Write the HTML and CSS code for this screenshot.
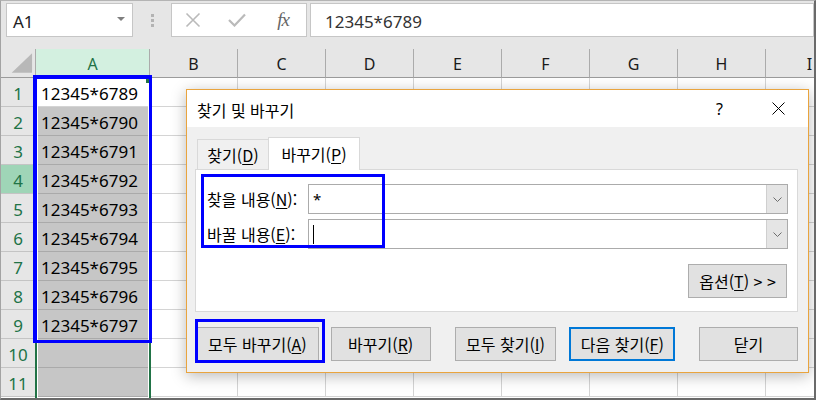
FILE: index.html
```html
<!DOCTYPE html>
<html lang="ko">
<head>
<meta charset="utf-8">
<title>찾기 및 바꾸기</title>
<link rel="stylesheet" href="styles.css">
</head>
<body>
<div class="frame">
  <div class="toolbar">
    <div class="namebox"><span class="nb-text">A1</span><span class="caret"></span></div>
    <div class="grip"><i></i><i></i><i></i></div>
    <div class="fxbox">
      <span class="slot slot-x"><svg width="16" height="16" viewBox="0 0 16 16"><path d="M1.5 1.5 L14.5 14.5 M14.5 1.5 L1.5 14.5" stroke="#bababa" stroke-width="1.6" fill="none"/></svg></span>
      <span class="slot"><svg width="18" height="14" viewBox="0 0 18 14"><path d="M1 7 L6.5 12.5 L17 1.5" stroke="#bababa" stroke-width="2.2" fill="none"/></svg></span>
      <span class="slot fx">fx</span>
    </div>
    <div class="formula">12345*6789</div>
  </div>

  <div class="sheet">
    <div class="row hdr">
      <div class="rh corner"><svg width="35" height="28" viewBox="0 0 35 28"><polygon points="32,4 32,24 11,24" fill="#b8b8b8"/></svg></div>
      <div class="ch a sel">A</div>
      <div class="ch">B</div><div class="ch">C</div><div class="ch">D</div><div class="ch">E</div>
      <div class="ch">F</div><div class="ch">G</div><div class="ch">H</div><div class="ch">I</div>
    </div>
    <div class="row"><div class="rh">1</div><div class="c a">12345*6789</div><div class="c"></div><div class="c"></div><div class="c"></div><div class="c"></div><div class="c"></div><div class="c"></div><div class="c"></div><div class="c"></div></div>
    <div class="row"><div class="rh">2</div><div class="c a on">12345*6790</div><div class="c"></div><div class="c"></div><div class="c"></div><div class="c"></div><div class="c"></div><div class="c"></div><div class="c"></div><div class="c"></div></div>
    <div class="row"><div class="rh">3</div><div class="c a on">12345*6791</div><div class="c"></div><div class="c"></div><div class="c"></div><div class="c"></div><div class="c"></div><div class="c"></div><div class="c"></div><div class="c"></div></div>
    <div class="row"><div class="rh hl">4</div><div class="c a on">12345*6792</div><div class="c"></div><div class="c"></div><div class="c"></div><div class="c"></div><div class="c"></div><div class="c"></div><div class="c"></div><div class="c"></div></div>
    <div class="row"><div class="rh">5</div><div class="c a on">12345*6793</div><div class="c"></div><div class="c"></div><div class="c"></div><div class="c"></div><div class="c"></div><div class="c"></div><div class="c"></div><div class="c"></div></div>
    <div class="row"><div class="rh">6</div><div class="c a on">12345*6794</div><div class="c"></div><div class="c"></div><div class="c"></div><div class="c"></div><div class="c"></div><div class="c"></div><div class="c"></div><div class="c"></div></div>
    <div class="row"><div class="rh">7</div><div class="c a on">12345*6795</div><div class="c"></div><div class="c"></div><div class="c"></div><div class="c"></div><div class="c"></div><div class="c"></div><div class="c"></div><div class="c"></div></div>
    <div class="row"><div class="rh">8</div><div class="c a on">12345*6796</div><div class="c"></div><div class="c"></div><div class="c"></div><div class="c"></div><div class="c"></div><div class="c"></div><div class="c"></div><div class="c"></div></div>
    <div class="row"><div class="rh">9</div><div class="c a on">12345*6797</div><div class="c"></div><div class="c"></div><div class="c"></div><div class="c"></div><div class="c"></div><div class="c"></div><div class="c"></div><div class="c"></div></div>
    <div class="row"><div class="rh">10</div><div class="c a on"></div><div class="c"></div><div class="c"></div><div class="c"></div><div class="c"></div><div class="c"></div><div class="c"></div><div class="c"></div><div class="c"></div></div>
    <div class="row"><div class="rh">11</div><div class="c a on"></div><div class="c"></div><div class="c"></div><div class="c"></div><div class="c"></div><div class="c"></div><div class="c"></div><div class="c"></div><div class="c"></div></div>
  </div>

  <div class="selbox"></div>
  <div class="fill-handle"></div>
  <div class="mark mark-col"></div>

  <div class="dialog">
    <div class="titlebar">
      <span class="title">찾기 및 바꾸기</span>
      <span class="capbtn">?</span>
      <span class="capbtn"><svg width="13" height="13" viewBox="0 0 13 13"><path d="M0.5 0.5 L12.5 12.5 M12.5 0.5 L0.5 12.5" stroke="#000" stroke-width="1" fill="none"/></svg></span>
    </div>
    <div class="body">
      <div class="tabs">
        <div class="tab">찾기(<u>D</u>)</div>
        <div class="tab active">바꾸기(<u>P</u>)</div>
      </div>
      <div class="panel">
        <div class="fields">
          <label class="lbl">찾을 내용(<u>N</u>):</label>
          <div class="combo"><span class="val">*</span><span class="dd"><svg width="9" height="5" viewBox="0 0 9 5"><path d="M0.5 0.5 L4.5 4.5 L8.5 0.5" stroke="#6d6d6d" stroke-width="1" fill="none"/></svg></span></div>
          <label class="lbl">바꿀 내용(<u>E</u>):</label>
          <div class="combo"><span class="val"><span class="cursor"></span></span><span class="dd"><svg width="9" height="5" viewBox="0 0 9 5"><path d="M0.5 0.5 L4.5 4.5 L8.5 0.5" stroke="#6d6d6d" stroke-width="1" fill="none"/></svg></span></div>
        </div>
        <div class="opts-row">
          <button class="btn opts">옵션(<u>T</u>) &gt; &gt;</button>
        </div>
      </div>
      <div class="buttons">
        <button class="btn b1">모두 바꾸기(<u>A</u>)</button>
        <button class="btn b2">바꾸기(<u>R</u>)</button>
        <button class="btn b3">모두 찾기(<u>I</u>)</button>
        <button class="btn b4 focus">다음 찾기(<u>F</u>)</button>
        <button class="btn b5">닫기</button>
      </div>
    </div>
    <div class="mark mark-labels"></div>
    <div class="mark mark-btn"></div>
  </div>
</div>
</body>
</html>
```

FILE: styles.css
```css
* { box-sizing: border-box; }
html, body { margin: 0; padding: 0; }
body {
  width: 816px;
  height: 400px;
  overflow: hidden;
  background: #ffffff;
  font-family: "Noto Sans", "Noto Sans CJK KR", sans-serif;
}

.frame {
  position: relative;
  width: 816px;
  height: 400px;
  overflow: hidden;
  background: #ffffff;
  border-left: 1px solid #a3a3a3;
  border-top: 1px solid #b4b4b4;
  border-right: 2px solid #6a6a6a;
  border-bottom: 2px solid #6a6a6a;
}

/* ---------- formula bar ---------- */
.toolbar {
  display: flex;
  align-items: flex-start;
  height: 48px;
  padding: 2px 0 0 5px;
  background: #e6e6e6;
}
.namebox {
  width: 127px;
  height: 34px;
  display: flex;
  align-items: center;
  padding-left: 6px;
  background: #fff;
  border: 1px solid #c6c6c6;
  font-size: 17px;
  color: #222;
}
.nb-text { flex: 1; padding-top: 3px; }
.caret {
  width: 0;
  height: 0;
  margin: 0 7px 2px 0;
  border-left: 4px solid transparent;
  border-right: 4px solid transparent;
  border-top: 4px solid #7f7f7f;
}
.grip {
  width: 38px;
  height: 34px;
  display: flex;
  flex-direction: column;
  align-items: center;
  justify-content: center;
  gap: 2px;
}
.grip i {
  display: block;
  width: 3px;
  height: 3px;
  background: #b3b3b3;
}
.fxbox {
  width: 136px;
  height: 34px;
  display: flex;
  align-items: center;
  background: #fff;
  border: 1px solid #c6c6c6;
}
.slot {
  width: 46px;
  height: 32px;
  display: flex;
  align-items: center;
  justify-content: center;
}
.slot-x { width: 42px; }
.fx {
  font-family: "Liberation Serif", serif;
  font-style: italic;
  font-size: 19px;
  color: #666;
  letter-spacing: -1px;
}
.formula {
  flex: 1;
  height: 34px;
  margin-left: 3px;
  display: flex;
  align-items: center;
  padding: 3px 0 0 14px;
  background: #fff;
  border: 1px solid #c6c6c6;
  font-size: 17px;
  color: #333;
}

/* ---------- sheet ---------- */
.row {
  display: flex;
  height: 29px;
}
.row > div { flex-shrink: 0; }
.rh {
  width: 35px;
  display: flex;
  align-items: center;
  justify-content: center;
  background: #e6e6e6;
  border-right: 1px solid #ababab;
  border-bottom: 1px solid #c4c4c4;
  font-size: 17px;
  color: #217346;
  padding-top: 2px;
}
.rh.hl { background: #9fd5b7; }
.corner { padding: 0; border-bottom: 1px solid #9b9b9b; }
.ch {
  width: 88px;
  display: flex;
  align-items: center;
  justify-content: center;
  background: #e6e6e6;
  border-right: 1px solid #ababab;
  border-bottom: 1px solid #9b9b9b;
  font-size: 16px;
  color: #1a1a1a;
  padding-top: 2px;
}
.ch.sel { background: #d3f0e0; color: #217346; }
.c {
  width: 88px;
  border-right: 1px solid #d4d4d4;
  border-bottom: 1px solid #d4d4d4;
}
.c.a, .ch.a { width: 114px; }
.c.a {
  display: flex;
  align-items: center;
  padding: 2px 0 0 5px;
  font-size: 17px;
  color: #000;
}
.c.on {
  background: #c6c6c6;
  border-bottom-color: #aaaaaa;
}

.selbox {
  position: absolute;
  left: 34px;
  top: 76px;
  width: 116px;
  height: 330px;
  border: 2px solid #217346;
  box-shadow: inset 0 0 0 1px #ffffff;
}
.fill-handle {
  position: absolute;
  left: 145px;
  top: 77px;
  width: 5px;
  height: 5px;
  background: #217346;
}
.mark {
  position: absolute;
  border: 3px solid #0000ff;
}
.mark-col {
  left: 32px;
  top: 74px;
  width: 119px;
  height: 268px;
  border-width: 4px 3px 3px 4px;
}

/* ---------- dialog ---------- */
.dialog {
  position: absolute;
  left: 185px;
  top: 88px;
  width: 623px;
  height: 284px;
  display: flex;
  flex-direction: column;
  background: #f0f0f0;
  border: 1px solid #e9a43e;
  box-shadow: 0 3px 14px rgba(0, 0, 0, 0.28);
  font-family: "Noto Sans CJK KR", "Noto Sans", sans-serif;
  font-size: 16px;
  color: #000;
}
.titlebar {
  height: 37px;
  display: flex;
  align-items: center;
  padding-left: 10px;
  background: #ffffff;
}
.title { flex: 1; padding-top: 2px; }
.capbtn {
  width: 59px;
  height: 37px;
  display: flex;
  align-items: center;
  justify-content: center;
  font-family: "Noto Sans", sans-serif;
  font-size: 16px;
}
.body {
  padding: 10px 10px 0 8px;
}
.tabs {
  position: relative;
  z-index: 1;
  display: flex;
  align-items: flex-end;
  height: 33px;
  margin: 0 0 -1px 2px;
}
.tab {
  width: 71px;
  height: 31px;
  display: flex;
  align-items: center;
  justify-content: center;
  background: #f0f0f0;
  border: 1px solid #d9d9d9;
  border-right: none;
}
.tab.active {
  width: 92px;
  height: 33px;
  background: #ffffff;
  border-right: 1px solid #d9d9d9;
  border-bottom: none;
  padding-bottom: 1px;
}
.panel {
  height: 143px;
  padding: 14px 9px 0 11px;
  background: #ffffff;
  border: 1px solid #d9d9d9;
}
.fields {
  display: grid;
  grid-template-columns: 101px 1fr;
  grid-auto-rows: 30px;
  row-gap: 5px;
}
.lbl {
  align-self: center;
  white-space: nowrap;
}
.combo {
  display: flex;
  background: #fff;
  border: 1px solid #ababab;
}
.val {
  flex: 1;
  display: flex;
  align-items: center;
  padding-left: 4px;
  font-family: "Noto Sans", sans-serif;
  font-size: 15px;
}
.cursor {
  display: block;
  width: 1px;
  height: 19px;
  background: #000;
}
.dd {
  width: 21px;
  display: flex;
  align-items: center;
  justify-content: center;
  background: #e5e5e5;
  border-left: 1px solid #cfcfcf;
}
.opts-row {
  display: flex;
  justify-content: flex-end;
  margin-top: 15px;
  padding-right: 1px;
}
.btn {
  height: 34px;
  display: flex;
  align-items: center;
  justify-content: center;
  padding: 0;
  background: #e1e1e1;
  border: 1px solid #adadad;
  font-family: "Noto Sans CJK KR", "Noto Sans", sans-serif;
  font-size: 16px;
  color: #000;
  white-space: nowrap;
}
.opts { width: 99px; }
.buttons {
  display: flex;
  margin-top: 15px;
  padding-left: 1px;
}
.b1 { width: 123px; }
.b2 { width: 100px; margin-left: 12px; }
.b3 { width: 102px; margin-left: 24px; }
.b4 { width: 106px; margin-left: 13px; }
.b5 { width: 99px; margin-left: 24px; }
.btn.focus { border: 2px solid #0078d7; }
u { text-underline-offset: 2px; }

.mark-labels {
  left: 14px;
  top: 84px;
  width: 184px;
  height: 74px;
}
.mark-btn {
  left: 8px;
  top: 229px;
  width: 130px;
  height: 44px;
}
```
